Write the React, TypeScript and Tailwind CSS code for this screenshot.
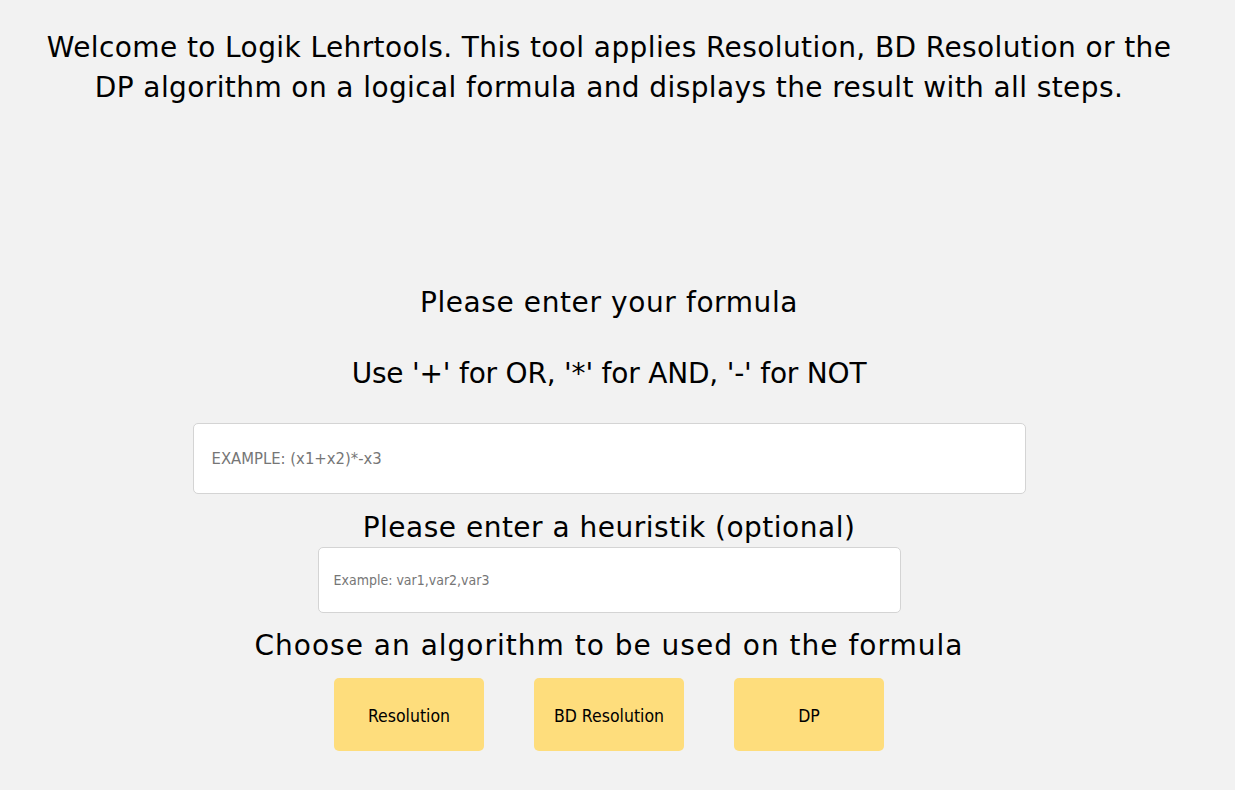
const headingFont = "font-['DejaVu_Sans',sans-serif]"
const controlFont = "font-['DejaVu_Sans_Condensed','DejaVu_Sans',sans-serif]"

const algorithms = ['Resolution', 'BD Resolution', 'DP']

function App() {
  return (
    <div className="min-h-[790px] w-full bg-[#f2f2f2] text-black">
      <div className={`flex w-[1218px] flex-col items-center ${headingFont}`}>
        <h1 className="m-0 mt-[28px] w-[1160px] text-center text-[28px] font-normal leading-[40px] tracking-[0.4px]">
          Welcome to Logik Lehrtools. This tool applies Resolution, BD Resolution or the DP algorithm on a
          logical formula and displays the result with all steps.
        </h1>

        <p className="m-0 mt-[175px] text-[28px] leading-[40px] tracking-[0.6px]">Please enter your formula</p>
        <p className="m-0 mt-[31px] text-[28px] leading-[40px] tracking-[-0.2px]">
          Use '+' for OR, '*' for AND, '-' for NOT
        </p>

        <input
          autoFocus
          className={`mt-[29px] h-[71px] w-[833px] rounded-[5px] border border-[#d4d4d4] bg-white px-[18px] text-[16.5px] text-gray-700 outline-none placeholder:text-[#767676] ${controlFont}`}
          placeholder="EXAMPLE: (x1+x2)*-x3"
        />

        <p className="m-0 mt-[14px] text-[28px] leading-[40px] tracking-[0.5px]">Please enter a heuristik (optional)</p>
        <input
          className={`mt-[-1px] h-[66px] w-[583px] rounded-[5px] border border-[#d4d4d4] bg-white px-[15px] text-[14px] text-gray-700 outline-none placeholder:text-[#767676] ${controlFont}`}
          placeholder="Example: var1,var2,var3"
        />

        <p className="m-0 mt-[13px] text-[28px] leading-[40px] tracking-[1px]">
          Choose an algorithm to be used on the formula
        </p>
        <div className="mt-[12px] flex gap-[50px]">
          {algorithms.map((name) => (
            <button
              key={name}
              className={`h-[73px] w-[150px] rounded-[5px] border-0 bg-[#fedd7c] pt-[3px] text-[17.5px] text-black ${controlFont}`}
            >
              {name}
            </button>
          ))}
        </div>
      </div>
    </div>
  )
}

export default App
